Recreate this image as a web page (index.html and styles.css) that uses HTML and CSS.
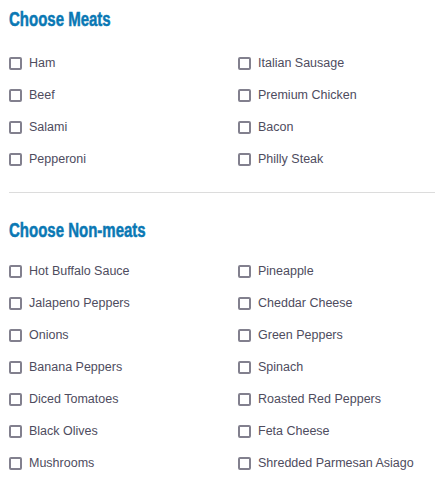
FILE: index.html
```html
<!DOCTYPE html>
<html>
<head>
<meta charset="utf-8">
<link rel="stylesheet" href="styles.css">
</head>
<body>
<div class="page">
  <section class="group">
    <h2 class="title"><span class="title-text">Choose Meats</span></h2>
    <div class="options">
      <label class="opt"><span class="box"></span>Ham</label>
      <label class="opt"><span class="box"></span>Italian Sausage</label>
      <label class="opt"><span class="box"></span>Beef</label>
      <label class="opt"><span class="box"></span>Premium Chicken</label>
      <label class="opt"><span class="box"></span>Salami</label>
      <label class="opt"><span class="box"></span>Bacon</label>
      <label class="opt"><span class="box"></span>Pepperoni</label>
      <label class="opt"><span class="box"></span>Philly Steak</label>
    </div>
  </section>
  <hr class="sep">
  <section class="group">
    <h2 class="title"><span class="title-text">Choose Non-meats</span></h2>
    <div class="options">
      <label class="opt"><span class="box"></span>Hot Buffalo Sauce</label>
      <label class="opt"><span class="box"></span>Pineapple</label>
      <label class="opt"><span class="box"></span>Jalapeno Peppers</label>
      <label class="opt"><span class="box"></span>Cheddar Cheese</label>
      <label class="opt"><span class="box"></span>Onions</label>
      <label class="opt"><span class="box"></span>Green Peppers</label>
      <label class="opt"><span class="box"></span>Banana Peppers</label>
      <label class="opt"><span class="box"></span>Spinach</label>
      <label class="opt"><span class="box"></span>Diced Tomatoes</label>
      <label class="opt"><span class="box"></span>Roasted Red Peppers</label>
      <label class="opt"><span class="box"></span>Black Olives</label>
      <label class="opt"><span class="box"></span>Feta Cheese</label>
      <label class="opt"><span class="box"></span>Mushrooms</label>
      <label class="opt"><span class="box"></span>Shredded Parmesan Asiago</label>
    </div>
  </section>
</div>
</body>
</html>
```
FILE: styles.css
```css
html, body {
  margin: 0;
  padding: 0;
  background: #fff;
}
body {
  font-family: "Liberation Sans", Arial, sans-serif;
  overflow: hidden;
}
.page {
  padding: 0 0 0 9px;
}
.title {
  margin: 0;
  height: 47px;
  padding-top: 8px;
  box-sizing: border-box;
  font-family: "Liberation Sans", Arial, sans-serif;
  font-weight: bold;
  font-size: 20px;
  line-height: 22px;
  color: #0a78b4;
  white-space: nowrap;
}
.title-text {
  display: inline-block;
  transform: scaleX(0.75);
  transform-origin: left top;
  -webkit-text-stroke: 0.5px #0a78b4;
}
.options {
  display: grid;
  grid-template-columns: 229px 1fr;
  grid-auto-rows: 32px;
}
.opt {
  display: flex;
  align-items: center;
  font-size: 12.5px;
  color: #4e4c5e;
  white-space: nowrap;
}
.box {
  width: 13px;
  height: 13px;
  box-sizing: border-box;
  border: 2px solid #82808e;
  border-radius: 2px;
  margin-right: 7px;
  flex: none;
}
.sep {
  margin: 17px 0 0 0;
  border: 0;
  border-top: 1px solid #dcdcdc;
  height: 0;
}
.group + .sep + .group .title {
  padding-top: 26px;
  height: 62px;
}
```
